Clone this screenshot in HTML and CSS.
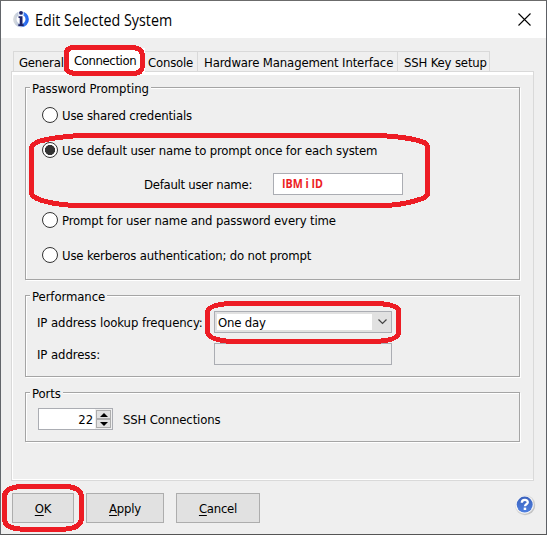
FILE: index.html
```html
<!DOCTYPE html>
<html lang="en">
<head>
<meta charset="utf-8">
<title>Edit Selected System</title>
<link rel="stylesheet" href="styles.css">
</head>
<body>
<div class="window">
  <header class="titlebar">
    <svg class="app-icon" width="18" height="18" viewBox="0 0 18 18">
      <defs><linearGradient id="ring" x1="0" x2="1"><stop offset="0" stop-color="#d4d8dc"/><stop offset=".5" stop-color="#a9bbe0"/><stop offset=".7" stop-color="#3f7df0"/><stop offset="1" stop-color="#2466ee"/></linearGradient></defs>
      <circle cx="9" cy="9.3" r="6.200" fill="none" stroke="url(#ring)" stroke-width="3.4"/>
      <path d="M6 0h6v5H6z" fill="#fff" opacity=".6"/>
      <circle cx="9" cy="2.8" r="1.900" fill="#1d2268"/>
      <path d="M6.500 6.200h4v8h1.200V16H6.300v-1.800h1.400V8H6.500z" fill="#1d2268"/>
    </svg>
    <h1 class="title"><span>Edit Selected System</span></h1>
    <svg class="close" width="13" height="13" viewBox="0 0 13 13"><path d="M.5.5l12 12M12.500.5l-12 12" stroke="#000" stroke-width="1.1"/></svg>
  </header>
  <main class="content">
    <nav class="tabs">
      <div class="tab general"><span>General</span></div>
      <div class="tab connection selected"><span>Connection</span></div>
      <div class="tab console"><span>Console</span></div>
      <div class="tab hardware"><span>Hardware Management Interface</span></div>
      <div class="tab ssh"><span>SSH Key setup</span></div>
    </nav>
    <div class="pane">
      <section class="group prompting">
        <h2 class="legend">Password Prompting</h2>
        <div class="radio-row"><i class="radio"></i><span class="t-shared">Use shared credentials</span></div>
        <div class="radio-row"><i class="radio checked"></i><span class="t-default">Use default user name to prompt once for each system</span></div>
        <div class="user-row"><span class="t-user">Default user name:</span><div class="field user-field"><b>IBM i ID</b></div></div>
        <div class="radio-row"><i class="radio"></i><span class="t-every">Prompt for user name and password every time</span></div>
        <div class="radio-row"><i class="radio"></i><span class="t-kerberos">Use kerberos authentication; do not prompt</span></div>
      </section>
      <section class="group performance">
        <h2 class="legend">Performance</h2>
        <div class="form-row"><span class="t-freq">IP address lookup frequency:</span>
          <div class="combo"><div class="combo-value">One day</div><svg class="chevron" width="9" height="6" viewBox="0 0 9 6"><path d="M.5.5l4 4 4-4" fill="none" stroke="#444" stroke-width="1.2"/></svg></div></div>
        <div class="form-row"><span class="t-ip">IP address:</span><div class="field disabled"></div></div>
      </section>
      <section class="group ports">
        <h2 class="legend">Ports</h2>
        <div class="port-row">
          <div class="spinner"><span>22</span><div class="arrows"><div class="arrow"><svg width="8" height="4" viewBox="0 0 8 4"><path d="M0 4l4-4 4 4z"/></svg></div><div class="arrow"><svg width="8" height="4" viewBox="0 0 8 4"><path d="M0 0l4 4 4-4z"/></svg></div></div></div>
          <span class="t-ssh">SSH Connections</span>
        </div>
      </section>
    </div>
    <footer class="actions">
      <div class="button ok"><span><u>O</u>K</span></div>
      <div class="button apply"><span><u>A</u>pply</span></div>
      <div class="button cancel"><span><u>C</u>ancel</span></div>
      <svg class="help" width="22" height="22" viewBox="0 0 22 22">
        <defs><linearGradient id="rim" x1="0" y1="0" x2="1" y2="1"><stop offset="0" stop-color="#f8f8f8"/><stop offset="1" stop-color="#b8b8b8"/></linearGradient><linearGradient id="ball" x1="0" y1="0" x2="0" y2="1"><stop offset="0" stop-color="#3b62bd"/><stop offset="1" stop-color="#4f80e0"/></linearGradient></defs>
        <circle cx="11" cy="11" r="10.200" fill="url(#rim)"/><circle cx="10.700" cy="10.700" r="9" fill="#f7f7f7"/><circle cx="10.700" cy="10.600" r="8" fill="url(#ball)"/>
        <path d="M7.800 8.700c0-3.500 6-3.700 6-.5 0 2-2.800 2.100-2.800 4" fill="none" stroke="#fff" stroke-width="2.300"/><path d="M9.700 13.600h2.500V16H9.700z" fill="#fff"/>
      </svg>
    </footer>
  </main>
</div>
<svg class="marks" width="547" height="535" viewBox="0 0 547 535" shape-rendering="crispEdges">
  <path d="M73 47.500H132Q142.500 48 142.500 56V66Q142 73.500 133 73.500H76Q66 73 66 66V55Q66 48 73 47.500Z"/>
  <path d="M80 135.500H378Q410 137 424 142.500Q427.500 144 427.500 148V194Q427 197 421 199Q404 205 384 205.500H75Q48 204 36 198Q31.500 196 31.500 193V148Q32 144 40 141Q55 137 80 135.500Z"/>
  <path d="M230 303.500H378Q398.500 305 398.500 310V333Q397 341 373 341.500H232Q208 340 207.500 332V312Q208 305 230 303.500Z"/>
  <path d="M20 486.500H67Q81.500 488 81.500 497V518Q81 528 66 529H20Q4.500 528 4.500 519V496Q5 488 20 486.500Z"/>
</svg>
</body>
</html>
```
FILE: styles.css
```css
* { box-sizing: border-box; }
body { margin: 0; width: 547px; height: 535px; overflow: hidden; font: 13px/18px "DejaVu Sans Condensed", "DejaVu Sans", sans-serif; font-stretch: condensed; color: #000; letter-spacing: -.08px; }
span, .legend, .combo-value { white-space: nowrap; }
.window { width: 547px; height: 535px; border: 1px solid #666; border-color: #6b6b6b #5d6065 #555 #62656a; background: #efefef; }
.titlebar { height: 37px; background: #fff; display: flex; align-items: center; padding: 0 15px 0 11px; }
.app-icon { margin-top: -1px; }
.title { margin: 0 auto 0 5px; font: 16px/24px "Open Sans", "Noto Sans", sans-serif; letter-spacing: 0; transform: scaleX(.893); transform-origin: left; }
.close { margin-top: -1px; }
.content { padding: 13px 12px 0 10px; }
.tabs { display: flex; height: 20px; padding-left: 2px; }
.tab { border: 1px solid #d9d9d9; border-width: 1px 1px 0 0; height: 20px; padding: 2px 0 0 6px; }
.general { width: 53px; border-left-width: 1px; padding-left: 5px; letter-spacing: -.2px; }
.selected { width: 79px; margin-top: -3px; padding: 4px 0 0 8px; background: #fff; border: 0; height: 26px; letter-spacing: -.4px; }
.console { width: 53px; padding-left: 3px; letter-spacing: -.2px; }
.hardware { width: 200px; letter-spacing: -.14px; }
.ssh { width: 92px; letter-spacing: -.16px; }
.pane { height: 410px; border: 1px solid #d9d9d9; box-shadow: inset 1px 0 #fff, inset 0 3px #fff, inset 0 -1px #fff; padding: 15px 13px 0; }
.group { position: relative; width: 495px; border: 1px solid #a5a5a5; box-shadow: inset 1px 1px #fff, 1px 1px #fff; }
.legend { position: absolute; left: 4px; top: -7px; margin: 0; padding: 0 2px; background: #efefef; font: inherit; line-height: 16px; }
.prompting { height: 193px; padding: 9px 0 0 16px; }
.radio-row { display: flex; align-items: center; height: 35px; gap: 4px; }
.radio-row > span, .user-row > span, .form-row > span { padding-top: 2px; }
.radio { width: 16px; height: 16px; border: 1px solid #333; border-radius: 50%; background: #fff; }
.checked { background: radial-gradient(circle, #333 0 4.800px, #fff 5.300px); }
.t-shared, .t-default, .t-kerberos { letter-spacing: -.17px; }
.t-every { letter-spacing: -.13px; }
.user-row { display: flex; align-items: center; height: 35px; padding: 0 0 2px 102px; }
.t-user { width: 129px; letter-spacing: -.26px; }
.field { height: 22px; border: 1px solid #abadb3; background: #fff; }
.user-field { width: 130px; padding: 0 0 0 8px; color: #ed1c24; font: 12px/20px "Open Sans", sans-serif; letter-spacing: 0; }
.user-field b { display: inline-block; transform: scaleX(.89); transform-origin: left; }
.performance { margin-top: 15px; height: 82px; padding: 10px 0 0 11px; }
.form-row { display: flex; height: 32px; align-items: center; }
.form-row > span { width: 177px; }
.combo { width: 178px; height: 22px; border: 1px solid #abadb3; background: #e1e1e1; padding: 2px; display: flex; align-items: center; }
.combo-value { width: 155px; height: 16px; line-height: 18px; background: #fff; padding-left: 1px; letter-spacing: -.2px; }
.chevron { margin-left: 6px; }
.disabled { width: 178px; background: #efefef; }
.ports { margin-top: 15px; height: 50px; padding: 15px 0 0 12px; }
.port-row { display: flex; align-items: center; gap: 10px; }
.port-row span { padding-top: 2px; }
.t-ssh { letter-spacing: -.15px; }
.spinner { width: 75px; height: 22px; border: 1px solid #abadb3; background: #fff; display: flex; justify-content: flex-end; align-items: center; gap: 2px; }
.arrows { width: 17px; height: 20px; padding: 1px; background: #efefef; }
.arrow { height: 9px; border: 1px solid #adadad; background: #e1e1e1; display: flex; align-items: center; justify-content: center; }
.actions { display: flex; padding: 12px 0 0 1px; align-items: flex-start; }
.button { height: 30px; border: 1px solid #adadad; background: #e1e1e1; display: flex; align-items: center; justify-content: center; margin-right: 12px; padding-top: 1px; letter-spacing: -.25px; }
.button u { text-underline-offset: 2px; text-decoration-thickness: 1px; }
.ok { width: 62px; }
.apply { width: 78px; }
.cancel { width: 84px; }
.help { margin-left: auto; margin-right: -2px; margin-top: 1px; }
.marks { position: absolute; left: 0; top: 0; fill: none; stroke: #ed1c24; stroke-width: 5; }
```
